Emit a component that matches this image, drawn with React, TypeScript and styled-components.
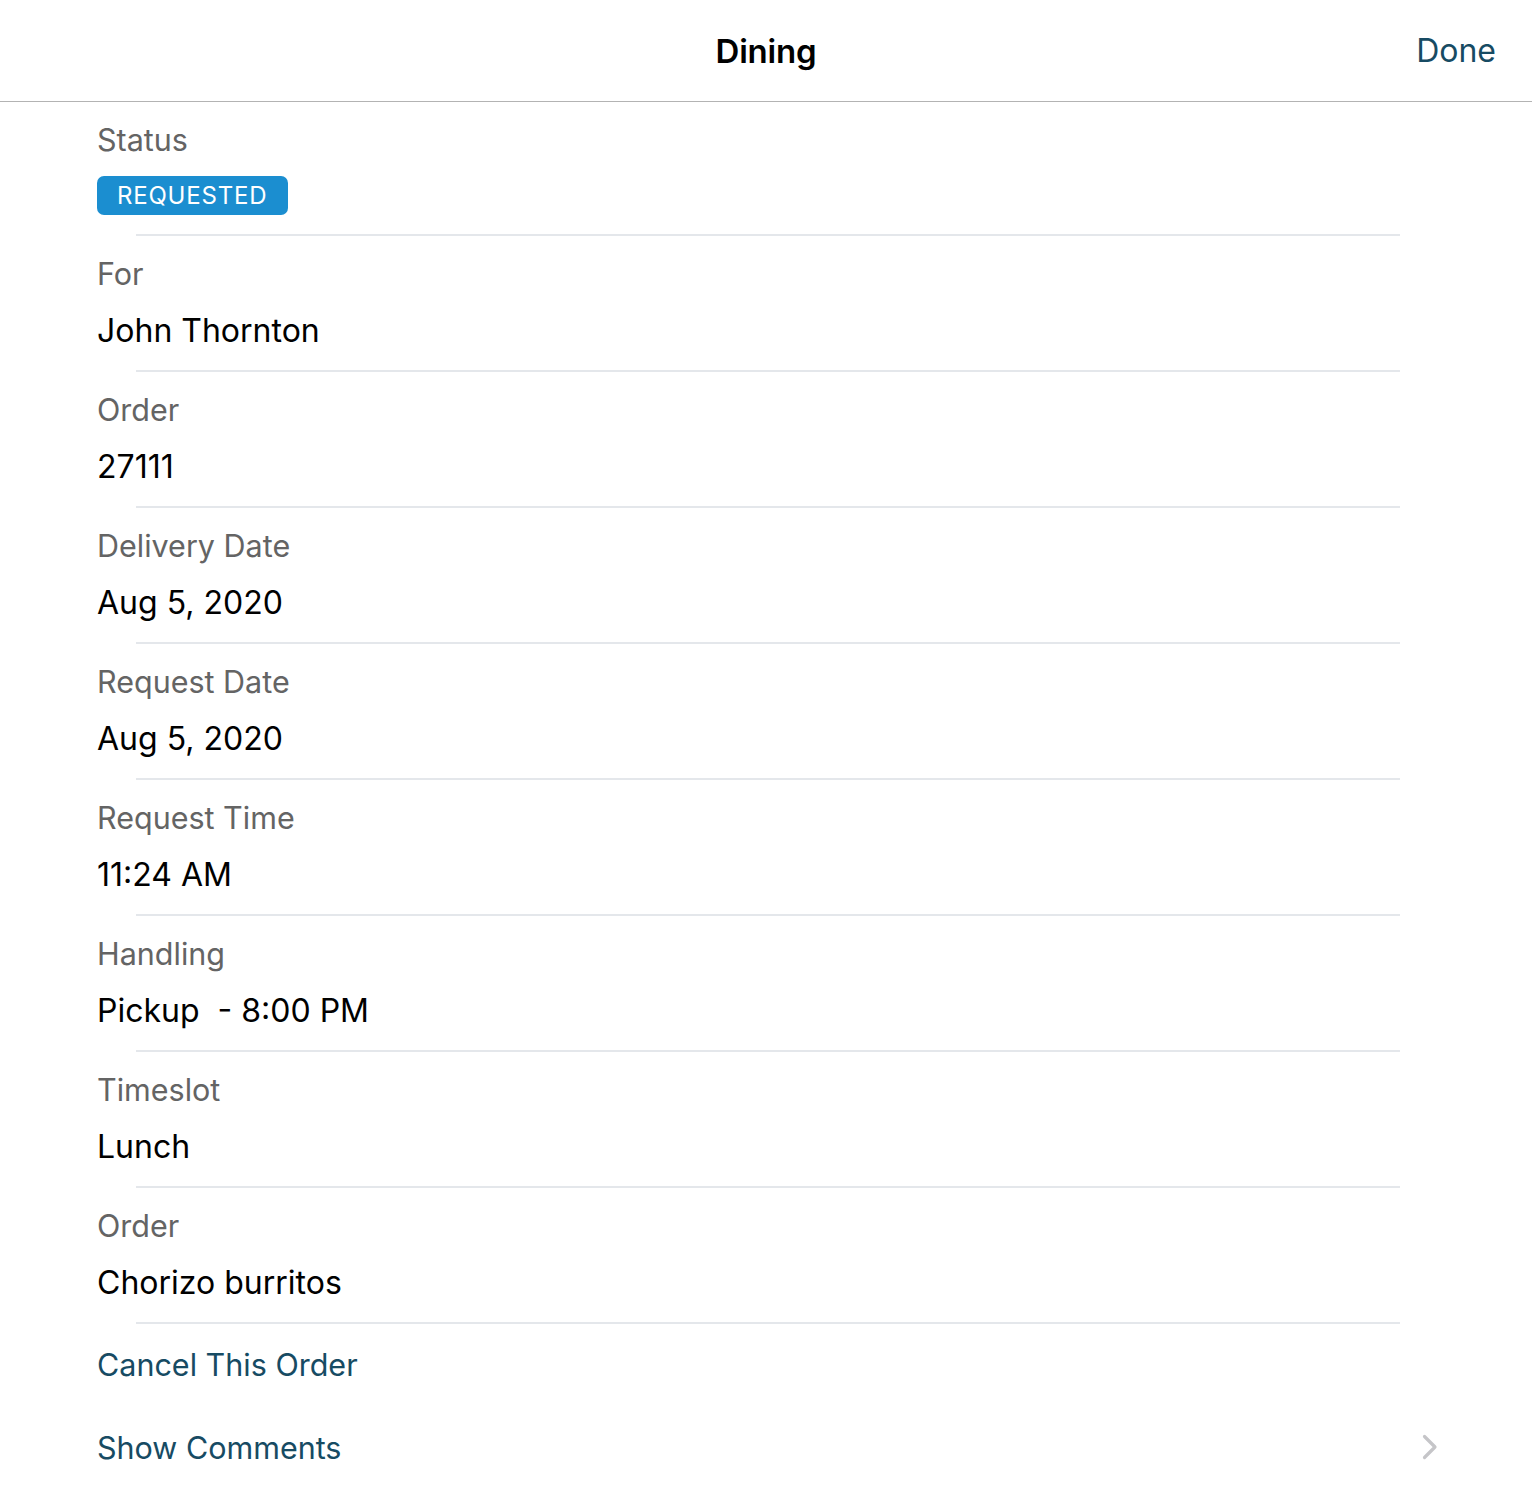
import styled, { createGlobalStyle } from "styled-components";

const GlobalStyle = createGlobalStyle`
  html, body {
    margin: 0;
    padding: 0;
    background: #ffffff;
  }
  body {
    font-family: Inter, "Noto Sans", "Liberation Sans", sans-serif;
    -webkit-font-smoothing: antialiased;
  }
`;

const Page = styled.div`
  width: 1532px;
  min-height: 1496px;
  background: #fff;
`;

const NavBar = styled.header`
  height: 102px;
  box-sizing: border-box;
  border-bottom: 1px solid #b3b3b3;
  display: grid;
  grid-template-columns: 1fr auto 1fr;
  align-items: center;
  padding: 0 36px;
`;

const NavTitle = styled.h1`
  grid-column: 2;
  margin: 0;
  font-size: 33px;
  font-weight: 600;
  color: #000;
  letter-spacing: -0.2px;
`;

const NavAction = styled.button`
  grid-column: 3;
  justify-self: end;
  border: none;
  background: none;
  padding: 0;
  font-family: inherit;
  font-size: 32px;
  color: #174b63;
  cursor: pointer;
`;

const List = styled.div`
  display: flex;
  flex-direction: column;
`;

const Field = styled.section<{ $gap?: number; $top?: number; $bottom?: number }>`
  padding: ${({ $top }) => $top ?? 20}px 0 ${({ $bottom }) => $bottom ?? 21}px 97px;
  display: flex;
  flex-direction: column;
  align-items: flex-start;
  gap: ${({ $gap }) => $gap ?? 21}px;
`;

const Separator = styled.hr`
  margin: 0 132px 0 136px;
  border: none;
  height: 2px;
  background: #e4e7eb;
`;

const Label = styled.div`
  font-size: 30.5px;
  line-height: 36px;
  color: #646464;
`;

const Value = styled.div`
  font-size: 32px;
  line-height: 36px;
  color: #000;
  white-space: pre;
`;

const Badge = styled.span`
  display: inline-block;
  background: #1b8ed0;
  color: #fff;
  font-size: 24px;
  line-height: 39px;
  letter-spacing: 0.8px;
  padding: 0 21px 0 20px;
  border-radius: 7px;
`;

const ActionRow = styled.div<{ $h: number }>`
  display: flex;
  align-items: center;
  justify-content: space-between;
  padding: 0 94px 0 97px;
  height: ${({ $h }) => $h}px;
`;

const ActionText = styled.span`
  font-size: 30.5px;
  color: #174b63;
`;

const Chevron = () => (
  <svg width="16" height="26" viewBox="0 0 16 26" fill="none">
    <path
      d="M2.5 2.5 L13 13 L2.5 23.5"
      stroke="#c5c5c8"
      strokeWidth="3.2"
      strokeLinecap="round"
      strokeLinejoin="round"
    />
  </svg>
);

const fields: { label: string; value: string }[] = [
  { label: "For", value: "John Thornton" },
  { label: "Order", value: "27111" },
  { label: "Delivery Date", value: "Aug 5, 2020" },
  { label: "Request Date", value: "Aug 5, 2020" },
  { label: "Request Time", value: "11:24 AM" },
  { label: "Handling", value: "Pickup  - 8:00 PM" },
  { label: "Timeslot", value: "Lunch" },
  { label: "Order", value: "Chorizo burritos" },
];

export default function App() {
  return (
    <Page>
      <GlobalStyle />
      <NavBar>
        <NavTitle>Dining</NavTitle>
        <NavAction>Done</NavAction>
      </NavBar>
      <List>
        <Field $top={20} $gap={18} $bottom={19}>
          <Label>Status</Label>
          <Badge>REQUESTED</Badge>
        </Field>
        <Separator />
        {fields.map((f, i) => (
          <div key={i}>
            <Field>
              <Label>{f.label}</Label>
              <Value>{f.value}</Value>
            </Field>
            <Separator />
          </div>
        ))}
        <ActionRow $h={80}>
          <ActionText>Cancel This Order</ActionText>
        </ActionRow>
        <ActionRow $h={86}>
          <ActionText>Show Comments</ActionText>
          <Chevron />
        </ActionRow>
      </List>
    </Page>
  );
}
